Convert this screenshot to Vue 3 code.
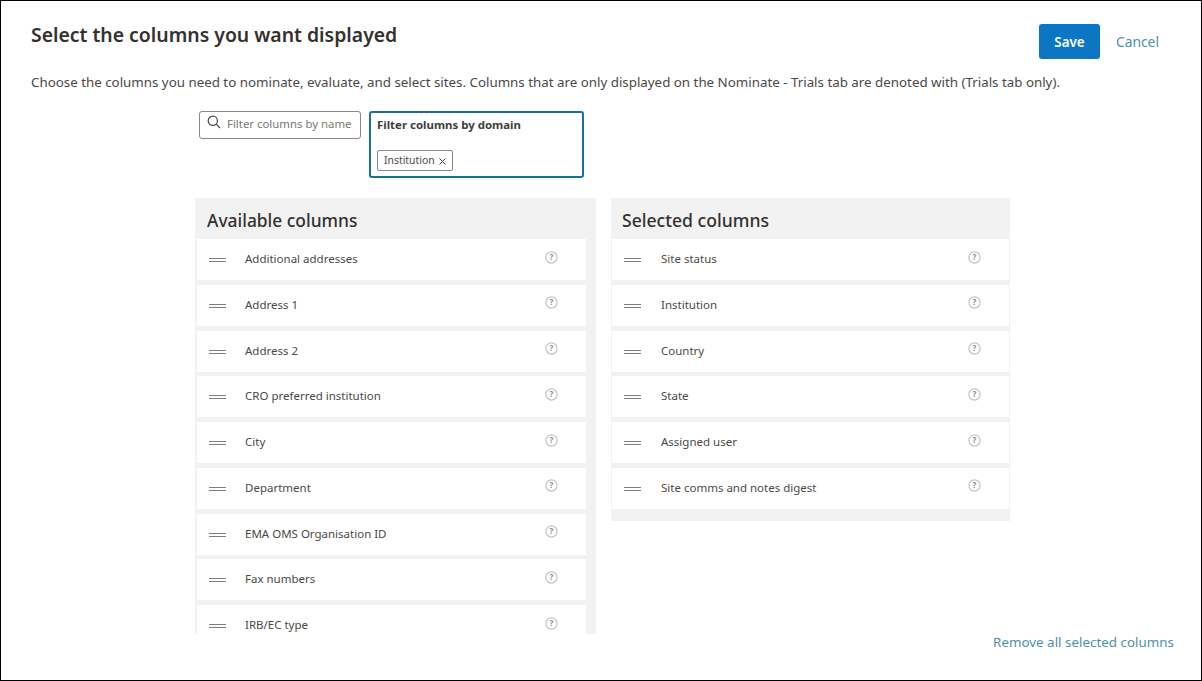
<script setup>
const available = [
  'Additional addresses',
  'Address 1',
  'Address 2',
  'CRO preferred institution',
  'City',
  'Department',
  'EMA OMS Organisation ID',
  'Fax numbers',
  'IRB/EC type',
]

const selected = [
  'Site status',
  'Institution',
  'Country',
  'State',
  'Assigned user',
  'Site comms and notes digest',
]

const panels = [
  { title: 'Available columns', items: available, cls: 'panel-left' },
  { title: 'Selected columns', items: selected, cls: 'panel-right' },
]
</script>

<template>
  <div class="page">
    <header class="top">
      <h1 class="title">Select the columns you want displayed</h1>
      <div class="actions">
        <button class="save">Save</button>
        <a class="cancel">Cancel</a>
      </div>
    </header>

    <p class="intro">
      Choose the columns you need to nominate, evaluate, and select sites. Columns that are only displayed on the Nominate - Trials tab are denoted with (Trials tab only).
    </p>

    <div class="filters">
      <div class="search">
        <svg class="search-icon" width="14" height="14" viewBox="0 0 14 14" fill="none" stroke="#4a4846" stroke-width="1.2">
          <circle cx="5.8" cy="5.8" r="4.6" />
          <path d="M9.2 9.2 L13 13" />
        </svg>
        <span class="placeholder">Filter columns by name</span>
      </div>
      <div class="domain">
        <div class="domain-label">Filter columns by domain</div>
        <span class="chip">
          Institution
          <svg class="chip-x" width="7" height="7" viewBox="0 0 7 7" stroke="#3f3d3b" stroke-width="1" fill="none">
            <path d="M0.5 0.5 L6.5 6.5 M6.5 0.5 L0.5 6.5" />
          </svg>
        </span>
      </div>
    </div>

    <div class="columns">
      <section v-for="panel in panels" :key="panel.title" class="panel" :class="panel.cls">
        <h2 class="panel-title">{{ panel.title }}</h2>
        <div class="rows">
          <div v-for="item in panel.items" :key="item" class="row">
            <span class="handle"></span>
            <span class="row-label">{{ item }}</span>
            <svg class="help" width="13" height="13" viewBox="0 0 13 13">
              <circle cx="6.5" cy="6.5" r="5.6" fill="#fff" stroke="#c4c4c2" stroke-width="1.2" />
              <text x="6.5" y="9.2" text-anchor="middle" class="help-mark">?</text>
            </svg>
          </div>
        </div>
      </section>
    </div>

    <div class="bottom">
      <a class="remove">Remove all selected columns</a>
    </div>
  </div>
</template>

<style scoped>
.page {
  box-sizing: border-box;
  width: 1202px;
  height: 681px;
  border: 1px solid #000;
  background: #fff;
  font-family: "Noto Sans", "Open Sans", sans-serif;
  color: #3f3d3b;
  overflow: hidden;
}

.top {
  display: flex;
  justify-content: space-between;
  align-items: flex-start;
  padding: 23px 43px 0 30px;
}

.title {
  margin: 0;
  font-size: 19.4px;
  line-height: 22px;
  font-weight: 600;
  color: #33312f;
}

.actions {
  display: flex;
  align-items: center;
  gap: 16px;
}

.save {
  width: 61px;
  height: 35px;
  border: none;
  border-radius: 3px;
  background: #0b77c4;
  color: #fff;
  font-family: inherit;
  font-size: 13.4px;
  font-weight: 600;
  padding: 0;
}

.cancel {
  color: #4f8fa8;
  font-size: 13.8px;
  width: 42px;
  white-space: nowrap;
}

.intro {
  margin: 13px 0 0 30px;
  font-size: 13.34px;
  line-height: 20px;
  color: #4a4846;
  white-space: nowrap;
}

.filters {
  display: flex;
  align-items: flex-start;
  gap: 8px;
  margin: 19px 0 0 198px;
}

.search {
  box-sizing: border-box;
  width: 162px;
  height: 28px;
  border: 1px solid #8a8886;
  border-radius: 3px;
  display: flex;
  align-items: center;
  gap: 6px;
  padding: 0 7px;
}

.search-icon {
  flex: none;
  margin-top: -6px;
}

.placeholder {
  font-size: 11.4px;
  color: #7a7876;
  white-space: nowrap;
  margin-top: -3px;
}

.domain {
  box-sizing: border-box;
  width: 215px;
  height: 67px;
  border: 2px solid #1a7094;
  border-radius: 3px;
  padding: 4px 6px;
}

.domain-label {
  font-size: 11.45px;
  line-height: 16px;
  font-weight: 700;
  color: #3f3d3b;
}

.chip {
  box-sizing: border-box;
  display: inline-flex;
  align-items: center;
  gap: 4px;
  height: 21px;
  margin-top: 17px;
  padding: 0 6px 2px;
  border: 1px solid #8a8886;
  border-radius: 2px;
  font-size: 10.4px;
  color: #4a4846;
}

.chip-x {
  margin-top: 4px;
}

.columns {
  display: flex;
  align-items: flex-start;
  gap: 15px;
  margin: 20px 0 0 194px;
  height: 436px;
  overflow: hidden;
}

.panel {
  background: #f2f2f2;
}

.panel-left {
  width: 401px;
  height: 436px;
  overflow: hidden;
  padding: 0 10px 0 2px;
  box-sizing: border-box;
}

.panel-right {
  width: 399px;
  box-sizing: border-box;
  padding: 0 1px 12px 1px;
}

.panel-title {
  margin: 0;
  height: 41px;
  padding-left: 10px;
  font-size: 17.4px;
  line-height: 44px;
  font-weight: 500;
  color: #33312f;
}

.panel-right .panel-title {
  font-size: 17.6px;
}

.rows {
  display: flex;
  flex-direction: column;
  gap: 4.75px;
}

.row {
  flex: none;
  height: 41px;
  background: #fff;
  display: flex;
  align-items: center;
  padding-left: 12px;
  padding-right: 28px;
}

.handle {
  flex: none;
  width: 17px;
  height: 2px;
  border-top: 1px solid #7f7e7c;
  border-bottom: 1px solid #7f7e7c;
  margin-top: 1px;
  margin-right: 19px;
}

.row-label {
  flex: 1;
  font-size: 11.5px;
  color: #4a4846;
  white-space: nowrap;
  margin-top: -2px;
}

.help {
  flex: none;
  margin-top: -5px;
}

.help-mark {
  font-size: 8px;
  font-weight: 700;
  fill: #8d8c8a;
}

.panel-right .row {
  padding-left: 12px;
}

.panel-right .handle {
  margin-right: 20px;
}

.bottom {
  display: flex;
  justify-content: flex-end;
  padding: 0 27px 0 0;
  margin-top: -2px;
}

.remove {
  color: #4f8fa8;
  font-size: 13.4px;
  line-height: 20px;
}
</style>

<style>
html, body {
  margin: 0;
  background: #fff;
}
</style>
